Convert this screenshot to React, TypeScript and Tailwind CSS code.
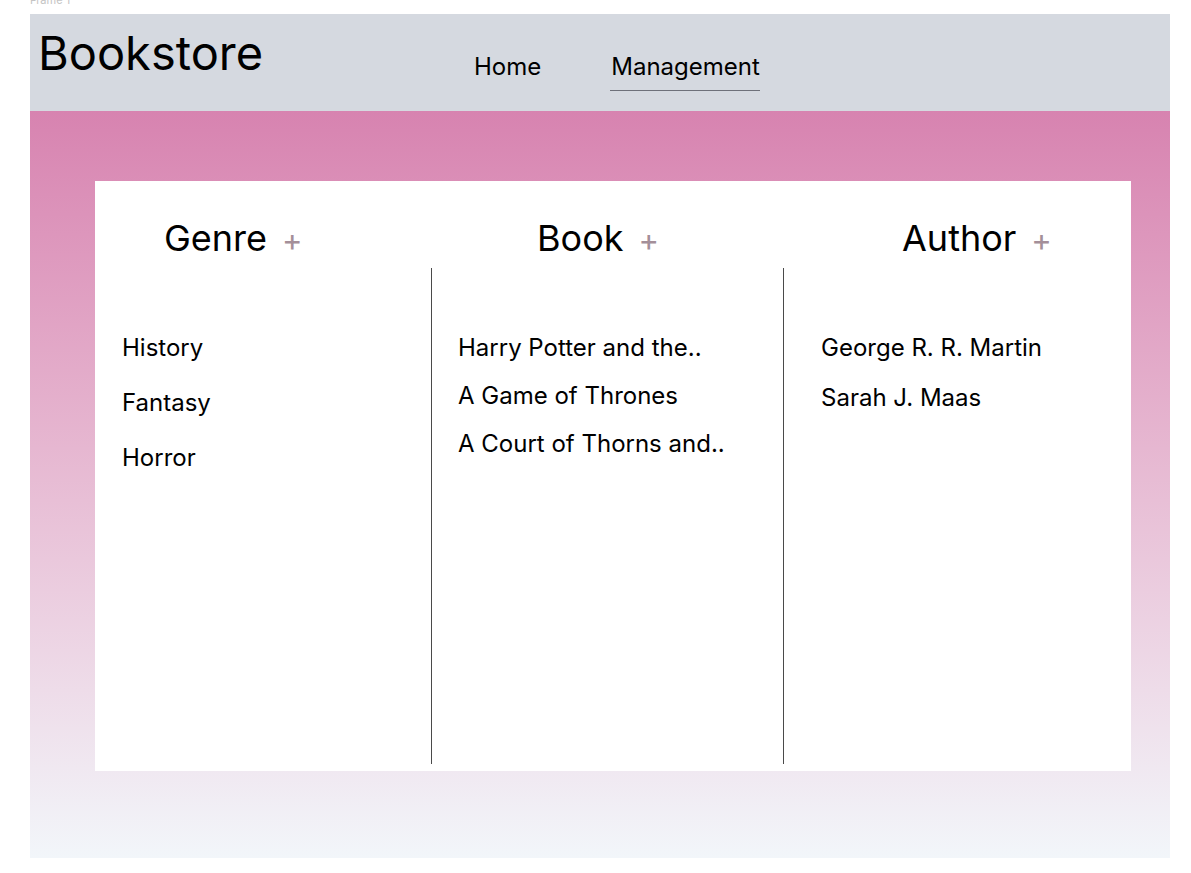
import React from "react";

type Column = {
  title: string;
  items: string[];
  width: string;
  headPad: string;
  listPad: string;
  gap: string;
  divider: boolean;
};

const columns: Column[] = [
  {
    title: "Genre",
    items: ["History", "Fantasy", "Horror"],
    width: "w-[336px]",
    headPad: "pl-[69px]",
    listPad: "pl-[27px]",
    gap: "gap-[31px]",
    divider: false,
  },
  {
    title: "Book",
    items: ["Harry Potter and the..", "A Game of Thrones", "A Court of Thorns and.."],
    width: "w-[352px]",
    headPad: "pl-[106px]",
    listPad: "pl-[26px]",
    gap: "gap-[24px]",
    divider: true,
  },
  {
    title: "Author",
    items: ["George R. R. Martin", "Sarah J. Maas"],
    width: "w-[348px]",
    headPad: "pl-[119px]",
    listPad: "pl-[37px]",
    gap: "gap-[26px]",
    divider: true,
  },
];

function Panel({ col }: { col: Column }) {
  return (
    <div className={`${col.width} flex flex-col`}>
      <div className={`h-[87px] pt-[39px] ${col.headPad} flex items-baseline`}>
        <span className="text-[36px] leading-none text-black">{col.title}</span>
        <button className="ml-[15px] text-[31px] leading-none text-[#a48f99]">+</button>
      </div>
      <div
        className={`h-[496px] pt-[68px] ${col.listPad} ${
          col.divider ? "border-l border-[#4a4a4a]" : ""
        }`}
      >
        <ul className={`flex flex-col ${col.gap}`}>
          {col.items.map((item) => (
            <li key={item} className="text-[24px] leading-[24px] text-black">
              {item}
            </li>
          ))}
        </ul>
      </div>
    </div>
  );
}

export default function App() {
  return (
    <div className="min-h-screen bg-white font-['Inter',sans-serif]">
      <div className="ml-[30px] w-[1140px]">
        <div className="h-[14px] overflow-hidden">
          <div className="-mt-[6px] text-[11px] leading-[12px] text-[#c4c4c4]">Frame 1</div>
        </div>

        <header className="h-[97px] bg-[#d5d9e0] flex items-start">
          <div className="w-[444px] pl-[8px] pt-[15px]">
            <h1 className="text-[47px] leading-none text-black">Bookstore</h1>
          </div>
          <nav className="flex items-start gap-[69px] pt-[41px] text-[24px] leading-none text-black">
            <a className="block">Home</a>
            <a className="block pl-[1px] pb-[11px] border-b-[1.5px] border-[#6e717a]">Management</a>
          </nav>
        </header>

        <main className="h-[747px] bg-gradient-to-b from-[#d783b0] to-[#f2f6fa] pt-[70px] pl-[65px]">
          <div className="w-[1036px] h-[590px] bg-white flex">
            {columns.map((col) => (
              <Panel key={col.title} col={col} />
            ))}
          </div>
        </main>
      </div>
    </div>
  );
}
